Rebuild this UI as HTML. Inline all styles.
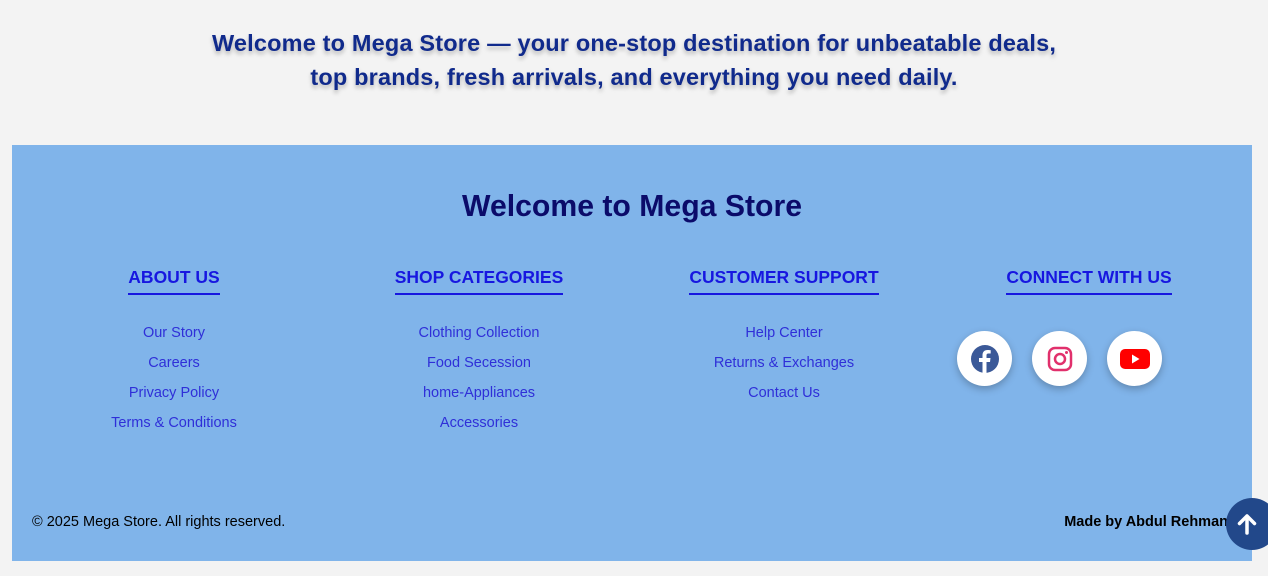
<!DOCTYPE html>
<html><head><style>
body{margin:0;width:1268px;height:576px;background:#f3f3f3;font-family:"Liberation Sans",sans-serif;position:relative;overflow:hidden}
.hero{position:absolute;top:26px;left:0;width:1268px;text-align:center;font-weight:bold;font-size:23.5px;line-height:34px;color:#102a8c;text-shadow:0 3px 4px rgba(0,0,0,.25);letter-spacing:0.18px}
.foot{position:absolute;left:12px;top:145px;width:1240px;height:416px;background:#80b4ea}
.title{position:absolute;top:45px;width:100%;text-align:center;font-size:30.2px;font-weight:bold;color:#0b0b6a}
.col{position:absolute;top:121px;width:300px;margin-left:-150px;text-align:center}
.col h3{display:inline-block;margin:0;font-size:17.5px;font-weight:bold;color:#1717e0;border-bottom:2px solid #1717e0;padding-bottom:5px;line-height:22px}
.col a{display:block;color:#2f2fd8;font-size:14.5px;line-height:30px;text-decoration:none}
.links{margin-top:23px}
.soc{position:absolute;top:186px;left:945px;display:flex;gap:20px}
.soc div{width:55px;height:55px;border-radius:50%;background:#fff;box-shadow:0 3px 8px rgba(0,0,0,.25);display:flex;align-items:center;justify-content:center}
.copy{position:absolute;left:20px;top:369px;font-size:14.5px;color:#000}
.made{position:absolute;right:24px;top:369px;font-size:14.5px;font-weight:bold;color:#000}
.up{position:absolute;left:1226px;top:498px;width:52px;height:52px;border-radius:50%;background:#22488a}
</style></head><body>
<div class="hero">Welcome to Mega Store — your one-stop destination for unbeatable deals,<br>top brands, fresh arrivals, and everything you need daily.</div>
<div class="foot">
<div class="title">Welcome to Mega Store</div>
<div class="col" style="left:162px"><h3>ABOUT US</h3><div class="links"><a>Our Story</a><a>Careers</a><a>Privacy Policy</a><a>Terms &amp; Conditions</a></div></div>
<div class="col" style="left:467px"><h3>SHOP CATEGORIES</h3><div class="links"><a>Clothing Collection</a><a>Food Secession</a><a>home-Appliances</a><a>Accessories</a></div></div>
<div class="col" style="left:772px"><h3>CUSTOMER SUPPORT</h3><div class="links"><a>Help Center</a><a>Returns &amp; Exchanges</a><a>Contact Us</a></div></div>
<div class="col" style="left:1077px"><h3>CONNECT WITH US</h3></div>
<div class="soc">
<div><svg width="30" height="30" viewBox="0 0 30 30"><circle cx="15" cy="15" r="14" fill="#3b5998"/><path d="M16.5 29V18h3.5l.5-4h-4v-2.5c0-1.2.4-2 2-2h2.2V6.2c-.4 0-1.7-.2-3.2-.2-3.1 0-5 1.9-5 5.3V14H9v4h3.5v11z" fill="#fff"/></svg></div>
<div><svg width="28" height="28" viewBox="0 0 28 28"><rect x="3" y="3" width="22" height="22" rx="6" fill="none" stroke="#e1306c" stroke-width="2.5"/><circle cx="14" cy="14" r="5" fill="none" stroke="#e1306c" stroke-width="2.5"/><circle cx="20.5" cy="7.5" r="1.5" fill="#e1306c"/></svg></div>
<div><svg width="32" height="24" viewBox="0 0 32 24"><rect x="1" y="2" width="30" height="20" rx="5" fill="#f00"/><path d="M13 7.5v9l7.5-4.5z" fill="#fff"/></svg></div>
</div>
<div class="copy">© 2025 Mega Store. All rights reserved.</div>
<div class="made">Made by Abdul Rehman</div>
</div>
<div class="up"><svg width="52" height="52" viewBox="0 0 52 52"><path d="M21 35V18M13.5 25.5L21 18l7.5 7.5" fill="none" stroke="#fff" stroke-width="3.5" stroke-linecap="round" stroke-linejoin="round"/></svg></div>
</body></html>
